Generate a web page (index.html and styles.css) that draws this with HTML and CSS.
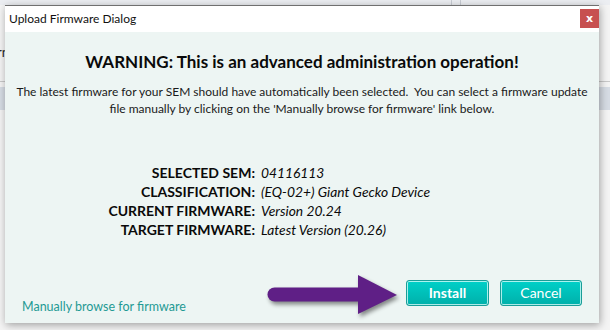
FILE: index.html
```html
<!DOCTYPE html>
<html lang="en">
<head>
<meta charset="utf-8">
<title>Upload Firmware Dialog</title>
<link rel="stylesheet" href="styles.css">
</head>
<body>
<div class="app">
  <div class="bg-top"><span class="bg-sep"></span><span class="bg-sep"></span></div>
  <div class="bg-word">rn</div>
  <div class="bg-rule"></div>
  <div class="bg-band"></div>
</div>

<div class="dialog" role="dialog" aria-label="Upload Firmware Dialog">
  <div class="titlebar">
    <span class="title">Upload Firmware Dialog</span>
    <button class="close" type="button" aria-label="Close">x</button>
  </div>
  <div class="content">
    <h1 class="warning">WARNING: This is an advanced administration operation!</h1>
    <p class="intro">The latest firmware for your SEM should have automatically been selected.&nbsp; You can select a firmware update<br>file manually by clicking on the 'Manually browse for firmware' link below.</p>
    <dl class="info">
      <dt>SELECTED SEM:</dt><dd>04116113</dd>
      <dt>CLASSIFICATION:</dt><dd>(EQ-02+) Giant Gecko Device</dd>
      <dt>CURRENT FIRMWARE:</dt><dd>Version 20.24</dd>
      <dt>TARGET FIRMWARE:</dt><dd>Latest Version (20.26)</dd>
    </dl>
    <div class="footer">
      <a class="browse" href="#">Manually browse for firmware</a>
      <svg class="arrow" width="140" height="44" viewBox="0 0 140 44" aria-hidden="true">
        <line x1="11.5" y1="23.5" x2="100" y2="23.5" stroke="#5f1f86" stroke-width="14" stroke-linecap="round"/>
        <polygon points="95,4 134,24 95,43" fill="#5f1f86"/>
      </svg>
      <div class="actions">
        <button class="btn btn-primary" type="button">Install</button>
        <button class="btn" type="button">Cancel</button>
      </div>
    </div>
  </div>
</div>
</body>
</html>
```
FILE: styles.css
```css
html, body {
  margin: 0;
  padding: 0;
}

body {
  width: 610px;
  height: 330px;
  overflow: hidden;
  position: relative;
  background: #f2f2f2;
  font-family: "Lato", "Open Sans", sans-serif;
  color: #000;
}

/* background application, partly hidden behind the dialog */
.app {
  height: 330px;
  background: #f4f4f4;
}

.bg-top {
  height: 5px;
  background: #eceef2;
  display: flex;
  gap: 8px;
  padding-left: 451px;
}

.bg-sep {
  width: 1px;
  background: #c8ccd3;
}

.bg-word {
  margin-top: 40px;
  margin-left: -3px;
  font-size: 13px;
  line-height: 14px;
  color: #222;
}

.bg-rule {
  margin-top: 22px;
  height: 1px;
  background: #c9c9c9;
}

.bg-band {
  margin-top: 5px;
  height: 23px;
  background: #d6dce4;
}

/* dialog */
.dialog {
  position: absolute;
  left: 5px;
  top: 5px;
  width: 594px;
  height: 317px;
  border-top: 1px solid #707070;
  background: #edf5f3;
  box-shadow: 1px 2px 8px rgba(0, 0, 0, 0.35);
  display: flex;
  flex-direction: column;
}

.titlebar {
  height: 26px;
  flex: none;
  background: #fff;
  display: flex;
  justify-content: space-between;
  align-items: flex-start;
}

.title {
  font-size: 12px;
  line-height: 18px;
  padding: 4px 0 0 4px;
  color: #111;
}

.close {
  margin-top: 3px;
  width: 19px;
  height: 19px;
  border: 0;
  padding: 0;
  background: #c75050;
  color: #fff;
  font: bold 11px/18px "DejaVu Sans", sans-serif;
  text-align: center;
}

.content {
  flex: 1;
  display: flex;
  flex-direction: column;
  padding: 0 17px;
}

.warning {
  margin: 19px 0 0;
  font-size: 17px;
  line-height: 22px;
  font-weight: 700;
  text-align: center;
  color: #0a0a0a;
}

.intro {
  margin: 10px -12px 0;
  font-size: 12px;
  line-height: 17px;
  text-align: center;
  color: #1a1a1a;
  white-space: nowrap;
}

.info {
  margin: 46px 0 0;
  display: grid;
  grid-template-columns: 233px auto;
  column-gap: 6px;
  font-size: 14px;
  line-height: 19px;
  color: #0a0a0a;
}

.info dt {
  text-align: right;
  font-weight: 700;
}

.info dd {
  margin: 0;
  font-style: italic;
  font-size: 13.8px;
}

.footer {
  margin-top: auto;
  padding-bottom: 8px;
  display: flex;
  align-items: flex-end;
}

.browse {
  font-size: 12.5px;
  line-height: 17px;
  color: #1f9a94;
  text-decoration: none;
}

.arrow {
  margin-left: auto;
  margin-right: 3px;
  overflow: visible;
  filter: drop-shadow(2px 3px 2px rgba(0, 0, 0, 0.45));
}

.actions {
  display: flex;
  gap: 11px;
  margin-bottom: 9px;
}

.btn {
  width: 83px;
  height: 26px;
  border: 1px solid #1a9e98;
  border-radius: 3px;
  box-shadow: inset 0 0 0 1px rgba(230, 255, 252, 0.75);
  background: linear-gradient(#00d0c8, #00b0aa);
  color: #fff;
  font: 14px/22px "Lato", sans-serif;
  padding: 0;
}

.btn + .btn {
  width: 82px;
}

.btn-primary {
  font-weight: 700;
}
```
